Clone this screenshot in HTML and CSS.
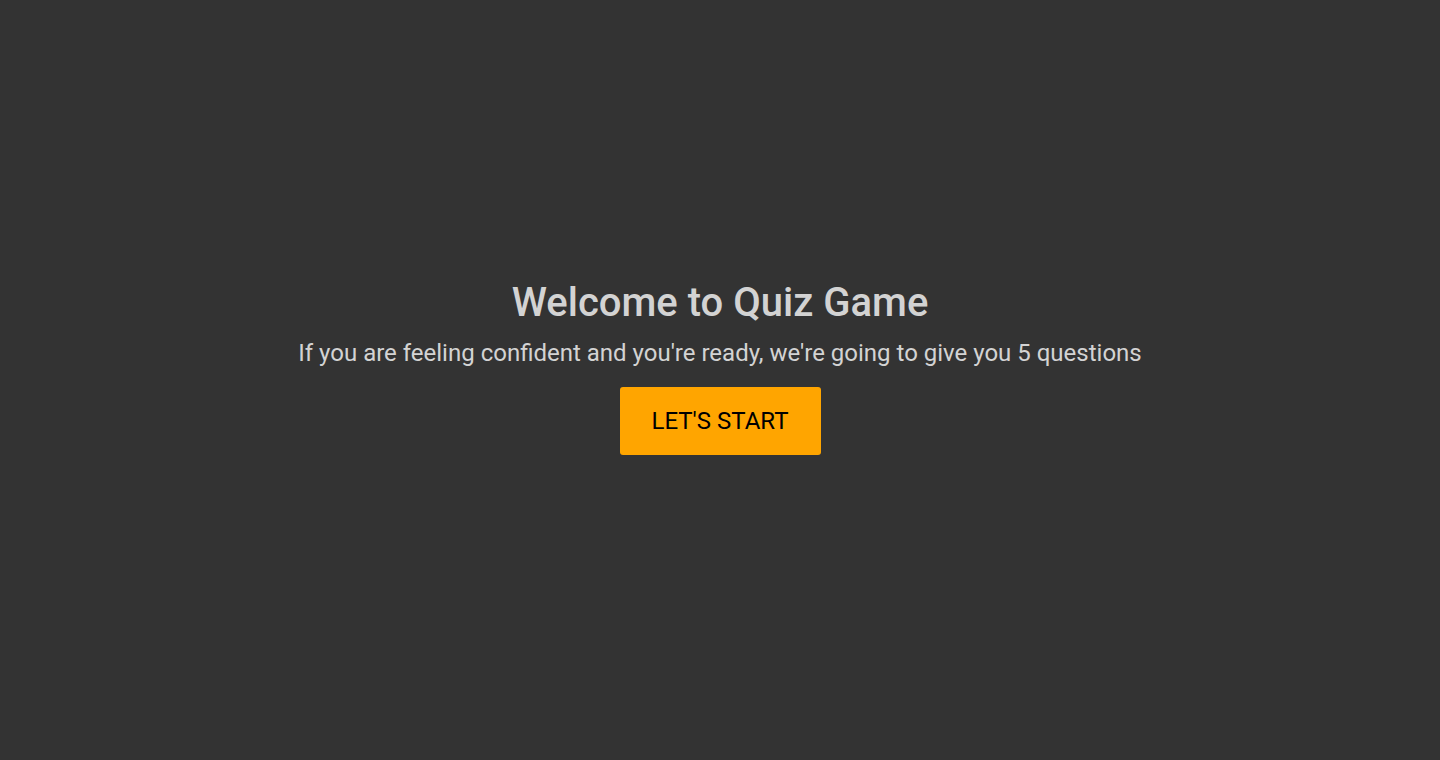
FILE: index.html
```html
<!DOCTYPE html>
<html lang="en">
<head>
<meta charset="utf-8">
<title>Quiz Game</title>
<link rel="stylesheet" href="styles.css">
</head>
<body>
<main class="home">
  <h1 class="title">Welcome to Quiz Game</h1>
  <p class="subtitle">If you are feeling confident and you're ready, we're going to give you 5 questions</p>
  <button class="start-btn" type="button">LET'S START</button>
</main>
</body>
</html>
```

FILE: styles.css
```css
html, body {
  margin: 0;
  padding: 0;
  height: 100%;
}
body {
  background: #333333;
  color: #d3d3d3;
  font-family: Roboto, "Liberation Sans", sans-serif;
}
.home {
  box-sizing: border-box;
  height: 100%;
  padding-bottom: 26px;
  display: flex;
  flex-direction: column;
  align-items: center;
  justify-content: center;
}
.title {
  margin: 0;
  font-size: 40px;
  font-weight: 500;
  line-height: 1.2;
}
.subtitle {
  margin: 11px 0 17px;
  font-size: 24px;
  line-height: 1.3;
}
.start-btn {
  background: #ffa500;
  color: #000;
  border: none;
  border-radius: 3px;
  font-family: inherit;
  font-size: 24px;
  padding: 20px 32px;
  cursor: pointer;
}
```
